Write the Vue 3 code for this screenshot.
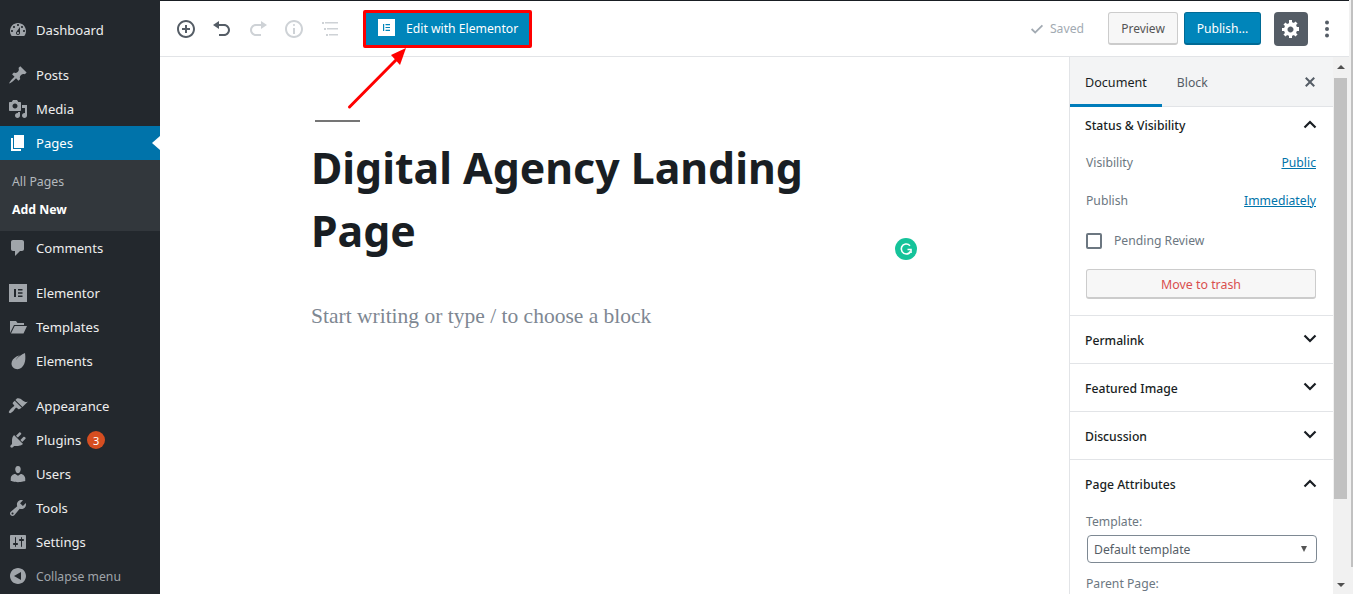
<script setup>
const groups = [
  [{ label: 'Dashboard', icon: 'M3.76 16h12.48c1.1-1.37 1.76-3.11 1.76-5 0-4.42-3.58-8-8-8s-8 3.58-8 8c0 1.89.66 3.63 1.76 5zM10 4c.55 0 1 .45 1 1s-.45 1-1 1-1-.45-1-1 .45-1 1-1zM6 6c.55 0 1 .45 1 1s-.45 1-1 1-1-.45-1-1 .45-1 1-1zm8 0c.55 0 1 .45 1 1s-.45 1-1 1-1-.45-1-1 .45-1 1-1zm-5.37 5.55L12 7v6c0 1.1-.9 2-2 2s-2-.9-2-2c0-.57.24-1.08.63-1.45zM4 10c.55 0 1 .45 1 1s-.45 1-1 1-1-.45-1-1 .45-1 1-1zm12 0c.55 0 1 .45 1 1s-.45 1-1 1-1-.45-1-1 .45-1 1-1zm-5 3c0-.55-.45-1-1-1s-1 .45-1 1 .45 1 1 1 1-.45 1-1z' }],
  [
    { label: 'Posts', icon: 'M10.44 3.02l1.82-1.82 6.36 6.35-1.83 1.82c-1.05-.68-2.48-.57-3.41.36l-.75.75c-.92.93-1.04 2.35-.35 3.41l-1.83 1.82-2.41-2.41-2.8 2.79c-.42.42-3.38 2.71-3.8 2.29s1.86-3.39 2.28-3.81l2.79-2.79L4.1 9.36l1.83-1.82c1.05.69 2.48.57 3.4-.36l.75-.75c.93-.92 1.05-2.35.36-3.41z' },
    { label: 'Media', icon: 'M13 11V4c0-.55-.45-1-1-1h-1.67L9 1H5L3.67 3H2c-.55 0-1 .45-1 1v7c0 .55.45 1 1 1h10c.55 0 1-.45 1-1zM7 4.500c1.380 0 2.500 1.120 2.500 2.500S8.380 9.500 7 9.500 4.500 8.380 4.500 7 5.620 4.500 7 4.500zM14 6h5v10.500c0 1.380-1.120 2.500-2.500 2.500S14 17.880 14 16.500s1.120-2.500 2.500-2.500c.17 0 .34.02.5.05V9h-3V6zm-4 8.050V13h2v3.500c0 1.380-1.120 2.500-2.500 2.500S7 17.880 7 16.500 8.120 14 9.500 14c.17 0 .34.02.5.05z' },
    { label: 'Pages', current: true, icon: 'M6 15V2h10v13H6zm-1 1h8v2H3V5h2v11z', sub: ['All Pages', 'Add New'] },
    { label: 'Comments', icon: 'M5 2h9c1.100 0 2 .9 2 2v7c0 1.100-.9 2-2 2h-2l-5 5v-5H5c-1.100 0-2-.9-2-2V4c0-1.100.9-2 2-2z' },
  ],
  [
    { label: 'Elementor', icon: 'M1 1h18v18H1zM6 6v8h2V6zm4 0v1.600h4.500V6zm0 3.200v1.600h4.500V9.200zm0 3.200V14h4.500v-1.600z', evenodd: true },
    { label: 'Templates', icon: 'M2 4h6l1.500 2H16v2H6L2 16zM6.700 9H19l-3.500 7.500H3z' },
    { label: 'Elements', icon: 'M17 2c.6 4 .6 8-.8 11-1.400 3-3.700 5.200-6.700 5.200-3.500 0-6-2.500-6-5.700 0-3 2-5.300 5-7 1.200-.7 2.500-1 3.600-1.100C10 5.400 8.600 7 8 9c1.800-3 5.500-5.500 9-7z' },
  ],
  [
    { label: 'Appearance', icon: 'M14.480 11.060L7.410 3.990l1.500-1.500c.5-.56 2.300-.47 3.510.32 1.210.8 1.430 1.280 2.910 2.100 1.180.64 2.450 1.260 4.450.85zm-.71.71L6.700 4.700 4.930 6.470c-.39.39-.39 1.020 0 1.410l1.060 1.060c.39.39.39 1.030 0 1.420-.6.6-1.430 1.110-2.210 1.690-.35.26-.7.53-1.010.84-.78.78-1.300 1.700-1.770 2.500-.36.6-.2 1 .2 1.400.4.4.8.6 1.400.2.8-.47 1.720-.99 2.500-1.770.31-.31.58-.66.84-1.010.58-.78 1.090-1.610 1.690-2.210.39-.39 1.030-.39 1.420 0l1.060 1.060c.39.39 1.020.39 1.410 0z' },
    { label: 'Plugins', badge: 3, icon: 'M13.110 4.360L9.870 7.600 8 5.730l3.240-3.240c.35-.34 1.050-.2 1.560.32.52.51.66 1.210.31 1.550zm-8 1.770l.91-1.120 9.010 9.010-1.190.84c-.71.71-2.630 1.160-3.820 1.160H6.140L4.900 17.260c-.59.59-1.540.59-2.120 0-.59-.58-.59-1.530 0-2.120l1.240-1.240v-3.880c0-1.130.4-3.190 1.090-3.890zm7.260 3.970l3.240-3.240c.34-.35 1.040-.21 1.550.31.52.51.66 1.210.31 1.550l-3.240 3.250z' },
    { label: 'Users', icon: 'M10 9.250c-2.270 0-2.730-3.440-2.730-3.440C7 4.020 7.820 2 9.970 2c2.160 0 2.980 2.020 2.710 3.810 0 0-.41 3.440-2.680 3.440zm0 2.570L12.720 10c2.390 0 4.520 2.330 4.520 4.530v2.490s-3.650 1.130-7.240 1.130c-3.650 0-7.240-1.130-7.240-1.130v-2.490c0-2.250 1.940-4.480 4.470-4.480z' },
    { label: 'Tools', icon: 'M16.680 9.770c-1.340 1.340-3.300 1.670-4.950.99l-5.410 6.520c-.99.99-2.590.99-3.580 0s-.99-2.590 0-3.570l6.520-5.420c-.68-1.650-.35-3.610.99-4.950 1.280-1.280 3.120-1.620 4.720-1.060l-2.890 2.890 2.820 2.820 2.860-2.870c.53 1.580.18 3.390-1.080 4.650zM3.810 16.210c.4.39 1.040.39 1.430 0 .4-.4.4-1.040 0-1.430-.39-.4-1.030-.4-1.430 0-.39.39-.39 1.030 0 1.430z' },
    { label: 'Settings', icon: 'M18 16V4c0-.55-.45-1-1-1H3c-.55 0-1 .45-1 1v12c0 .55.45 1 1 1h14c.55 0 1-.45 1-1zM8 11h1c.55 0 1 .45 1 1s-.45 1-1 1H8v1.500c0 .28-.22.5-.5.5s-.5-.22-.5-.5V13H6c-.55 0-1-.45-1-1s.45-1 1-1h1V5.500c0-.28.22-.5.5-.5s.5.22.5.5V11zm5-2h-1c-.55 0-1-.45-1-1s.45-1 1-1h1V5.500c0-.28.22-.5.5-.5s.5.22.5.5V7h1c.55 0 1 .45 1 1s-.45 1-1 1h-1v5.500c0 .28-.22.5-.5.5s-.5-.22-.5-.5V9z' },
    { label: 'Collapse menu', muted: true, icon: 'M18 10c0-4.420-3.580-8-8-8s-8 3.580-8 8 3.580 8 8 8 8-3.580 8-8zm-5 4l-7-4 7-4v8z' },
  ],
]
const tools = [
  { d: 'M10 1c-5 0-9 4-9 9s4 9 9 9 9-4 9-9-4-9-9-9zm0 16c-3.900 0-7-3.100-7-7s3.100-7 7-7 7 3.100 7 7-3.100 7-7 7zm1-11H9v3H6v2h3v3h2v-3h3V9h-3V6z', on: true },
  { d: 'M12 5H7V2L1 6l6 4V7h5c2.200 0 4 1.800 4 4s-1.800 4-4 4H7v2h5c3.300 0 6-2.700 6-6s-2.700-6-6-6z', on: true },
  { d: 'M8 5h5V2l6 4-6 4V7H8c-2.200 0-4 1.800-4 4s1.800 4 4 4h5v2H8c-3.300 0-6-2.700-6-6s2.700-6 6-6z' },
  { d: 'M9 15h2V9H9v6zm1-10c-.5 0-1 .5-1 1s.5 1 1 1 1-.5 1-1-.5-1-1-1zm0-4c-5 0-9 4-9 9s4 9 9 9 9-4 9-9-4-9-9-9zm0 16c-3.900 0-7-3.100-7-7s3.100-7 7-7 7 3.100 7 7-3.100 7-7 7z' },
  { d: 'M2 3h2v2H2zM5 3h13v1.500H5zM4 9h2v2H4zM7 9h11v1.500H7zM6 15h2v2H6zM9 15h9v1.500H9z' },
]
const closedPanels = ['Permalink', 'Featured Image', 'Discussion']
</script>

<template>
  <div class="page">
    <aside class="sidebar">
      <ul v-for="(group, i) in groups" :key="i" class="group">
        <li v-for="item in group" :key="item.label">
          <div class="item" :class="{ current: item.current, muted: item.muted }">
            <svg class="menu-icon" viewBox="0 0 20 20"><path :d="item.icon" :fill-rule="item.evenodd ? 'evenodd' : 'nonzero'" /></svg>
            <span>{{ item.label }}</span>
            <span v-if="item.badge" class="badge">{{ item.badge }}</span>
          </div>
          <ul v-if="item.sub" class="submenu">
            <li v-for="(s, j) in item.sub" :key="s" :class="{ strong: j === 1 }">{{ s }}</li>
          </ul>
        </li>
      </ul>
    </aside>

    <div class="editor">
      <header class="topbar">
        <div class="tools">
          <svg v-for="(t, i) in tools" :key="i" class="tool" :class="{ on: t.on }" viewBox="0 0 20 20"><path :d="t.d" /></svg>
        </div>
        <div class="elementor-wrap">
          <button class="elementor-btn">
            <svg class="e-icon" viewBox="0 0 17 17"><rect width="17" height="17" fill="#fff" /><path d="M5 5h1.200v7H5zM7.500 5H12v1.200H7.500zM7.500 7.900H12v1.200H7.500zM7.500 10.800H12V12H7.500z" fill="#0085ba" /></svg>
            <span>Edit with Elementor</span>
          </button>
        </div>
        <div class="actions">
          <svg class="check" viewBox="0 0 20 20"><path d="M15.300 5.300 8 12.600 4.700 9.300 3.300 10.700 8 15.400l8.700-8.700z" /></svg>
          <span class="saved">Saved</span>
          <button class="btn-preview">Preview</button>
          <button class="btn-publish">Publish...</button>
          <button class="btn-gear">
            <svg viewBox="0 0 20 20"><path d="M18 12h-2.180c-.17.7-.44 1.350-.81 1.930l1.540 1.540-2.100 2.100-1.540-1.540c-.58.36-1.230.64-1.910.81V19H8v-2.180c-.68-.17-1.330-.45-1.910-.81l-1.540 1.540-2.120-2.120 1.540-1.540c-.36-.58-.64-1.230-.81-1.890H1V9h2.180c.17-.7.44-1.350.8-1.930L2.460 5.530l2.100-2.100 1.540 1.540c.58-.36 1.230-.64 1.910-.81V1h3v2.180c.68.17 1.330.45 1.910.81l1.540-1.540 2.120 2.120-1.540 1.540c.36.58.64 1.230.81 1.890H18v3zm-8.500 1.500c1.660 0 3-1.340 3-3s-1.340-3-3-3-3 1.340-3 3 1.340 3 3 3z" fill="#fff" /></svg>
          </button>
          <svg class="kebab" viewBox="0 0 6 20"><circle cx="3" cy="3.500" r="2" /><circle cx="3" cy="10" r="2" /><circle cx="3" cy="16.500" r="2" /></svg>
        </div>
      </header>

      <div class="workspace">
        <main class="canvas">
          <div class="separator"></div>
          <h1 class="title">Digital Agency Landing Page</h1>
          <p class="placeholder">Start writing or type / to choose a block</p>
          <div class="grammarly">
            <svg viewBox="0 0 22 22"><circle cx="11" cy="11" r="11" fill="#15c39a" /><path d="M15.500 13.500c-.8 1.500-2.500 2.500-4.300 2.500A5 5 0 1 1 15 7.700" fill="none" stroke="#fff" stroke-width="1.600" /><path d="M12.500 11.500h3.500v3.500" fill="none" stroke="#fff" stroke-width="1.600" /></svg>
          </div>
        </main>

        <aside class="panel">
          <div class="tabs">
            <div class="tab active">Document</div>
            <div class="tab">Block</div>
            <svg class="close" viewBox="0 0 20 20"><path d="M14.950 6.460 11.410 10l3.540 3.540-1.410 1.410L10 11.420l-3.530 3.530-1.420-1.420L8.580 10 5.050 6.470l1.420-1.420L10 8.580l3.540-3.530z" /></svg>
          </div>

          <section class="sec status">
            <div class="sec-head">
              <span>Status &amp; Visibility</span>
              <svg class="chev" viewBox="0 0 14 9"><path d="M1.500 7.500 7 2l5.500 5.500" /></svg>
            </div>
            <div class="row first"><span>Visibility</span><a>Public</a></div>
            <div class="row second"><span>Publish</span><a>Immediately</a></div>
            <label class="pending"><i class="box"></i><span>Pending Review</span></label>
            <button class="trash">Move to trash</button>
          </section>

          <section v-for="p in closedPanels" :key="p" class="sec closed">
            <div class="sec-head">
              <span>{{ p }}</span>
              <svg class="chev" viewBox="0 0 14 9"><path d="M1.500 1.500 7 7l5.500-5.500" /></svg>
            </div>
          </section>

          <section class="sec attrs">
            <div class="sec-head">
              <span>Page Attributes</span>
              <svg class="chev" viewBox="0 0 14 9"><path d="M1.500 7.500 7 2l5.500 5.500" /></svg>
            </div>
            <div class="field-label">Template:</div>
            <div class="select"><span>Default template</span><i class="caret"></i></div>
            <div class="field-label parent">Parent Page:</div>
          </section>
        </aside>

        <div class="scrollbar">
          <i class="arrow up"></i>
          <div class="thumb"></div>
          <i class="arrow down"></i>
        </div>
      </div>
    </div>

    <div class="page-scroll"><div class="page-thumb"></div></div>

    <svg class="annotation" width="80" height="80" viewBox="0 0 80 80">
      <path d="M3.500 67 52 18" stroke="#f00" stroke-width="3" stroke-linecap="round" fill="none" />
      <path d="M60 8 45 15 54 25z" fill="#f00" />
    </svg>
  </div>
</template>

<style>
html, body { margin: 0; padding: 0; background: #fff; overflow: hidden; }
</style>

<style scoped>
* { box-sizing: border-box; }
.page { position: relative; display: flex; width: 1353px; height: 594px; overflow: hidden; background: #fff; font-family: "Noto Sans", "Open Sans", sans-serif; font-size: 12.2px; color: #191e23; }
ul { list-style: none; margin: 0; padding: 0; }
button { font-family: inherit; font-size: 12.2px; cursor: pointer; }

.sidebar { flex: 0 0 160px; background: #23282d; padding-top: 13px; }
.group + .group { margin-top: 11px; }
.item { position: relative; display: flex; align-items: center; height: 34px; padding-left: 8px; color: #eee; font-size: 13.1px; }
.menu-icon { width: 20px; height: 20px; margin-right: 8px; fill: #a0a5aa; flex: none; }
.item.current { background: #0073aa; color: #fff; }
.item.current .menu-icon { fill: #fff; }
.item.current::after { content: ""; position: absolute; right: 0; top: 10px; border: 7px solid transparent; border-right: 8px solid #fff; border-left: 0; }
.item.muted { color: #a0a5aa; font-size: 12.2px; }
.badge { display: inline-flex; align-items: center; justify-content: center; width: 18px; height: 18px; margin-left: 6px; border-radius: 50%; background: #d54e21; color: #fff; font-size: 11px; }
.submenu { height: 71px; background: #32373c; padding-top: 8px; font-size: 12.3px; color: #b4b9be; }
.submenu li { height: 28px; line-height: 28px; padding-left: 12px; }
.submenu .strong { color: #fff; font-weight: 700; }

.editor { flex: 1; display: flex; flex-direction: column; min-width: 0; }
.topbar { display: flex; align-items: center; height: 57px; border-top: 1px solid #191e23; border-bottom: 1px solid #e2e4e7; }
.tools { display: flex; gap: 16px; padding-left: 16px; width: 203px; }
.tool { width: 20px; height: 20px; fill: #ced2d6; }
.tool.on { fill: #555d66; }
.elementor-wrap { display: flex; }
.elementor-btn { display: flex; align-items: center; width: 169px; height: 38px; padding: 0 0 2px 12px; background: #0085ba; border: 3px solid #f00; border-radius: 2px; color: #fff; }
.elementor-btn span { padding-top: 2px; }
.e-icon { width: 17px; height: 17px; margin-right: 11px; flex: none; }
.actions { display: flex; align-items: center; margin-left: auto; padding-right: 15px; }
.check { width: 18px; height: 18px; fill: #a2aab2; margin-right: 4px; }
.saved { color: #a2aab2; font-size: 12.2px; margin-right: 24px; }
.btn-preview { width: 70px; height: 33px; margin-right: 6px; padding: 0; background: #f7f7f7; border: 1px solid #ccc; border-bottom-width: 2px; border-radius: 3px; color: #555; font-size: 12px; }
.btn-publish { width: 77px; height: 33px; margin-right: 13px; padding: 0; background: #0085ba; border: 1px solid #006a95; border-bottom-width: 2px; border-radius: 3px; color: #fff; font-size: 12.1px; }
.btn-gear { display: flex; align-items: center; justify-content: center; width: 34px; height: 34px; padding: 0; margin-right: 16px; background: #555d66; border: 0; border-radius: 4px; }
.btn-gear svg { width: 20px; height: 20px; }
.kebab { width: 6px; height: 20px; margin-right: 4px; fill: #555d66; }

.workspace { flex: 1; display: flex; min-height: 0; }
.canvas { position: relative; flex: 1; padding: 63px 0 0 152px; }
.separator { width: 45px; height: 2px; margin-left: 3px; background: #757575; }
.title { width: 560px; margin: 14px 0 0 -1px; font-size: 42.8px; line-height: 63px; font-weight: 700; color: #191e23; }
.placeholder { margin: 39px 0 0 -1px; font-family: "Liberation Serif", serif; font-size: 21.5px; line-height: 30px; color: #7e8792; }
.grammarly { position: absolute; left: 735px; top: 181px; width: 22px; height: 22px; }
.grammarly svg { display: block; width: 22px; height: 22px; }

.panel { flex: 0 0 264px; border-left: 1px solid #e2e4e7; overflow: hidden; }
.tabs { position: relative; display: flex; height: 50px; background: #f3f4f5; border-bottom: 1px solid #e2e4e7; }
.tab { display: flex; align-items: center; height: 50px; padding: 0 15px; color: #555d66; font-size: 12.2px; }
.tab.active { color: #191e23; font-size: 12.6px; border-bottom: 3px solid #007cba; padding-top: 3px; }
.close { position: absolute; right: 13px; top: 15px; width: 20px; height: 20px; fill: #555d66; }
.sec { border-bottom: 1px solid #e2e4e7; padding: 0 16px 0 15px; }
.sec-head { display: flex; align-items: center; justify-content: space-between; height: 47px; font-weight: 500; color: #191e23; font-size: 12.2px; }
.chev { width: 14px; height: 9px; fill: none; stroke: #191e23; stroke-width: 2.2; margin-top: -2px; }
.status { height: 209px; }
.status .sec-head { height: 36px; }
.row { display: flex; align-items: center; justify-content: space-between; height: 20px; padding: 0 1px; color: #6c7781; }
.row a { color: #0073aa; text-decoration: underline; }
.row.first { margin-top: 9px; }
.row.second { margin-top: 18px; }
.pending { display: flex; align-items: center; gap: 12px; margin-top: 22px; padding-left: 1px; color: #6c7781; }
.box { width: 16px; height: 16px; border: 2px solid #6c7781; border-radius: 2px; }
.trash { display: block; width: 230px; height: 30px; margin: 20px 0 0 1px; padding: 2px 0 0; background: #f7f7f7; border: 1px solid #ccc; border-bottom-width: 2px; border-radius: 3px; color: #d94f4f; font-size: 12.4px; }
.closed { height: 48px; }
.closed .sec-head { height: 49px; }
.closed .chev { margin-top: -4px; }
.attrs { border-bottom: 0; }
.attrs .sec-head { height: 48px; }
.field-label { color: #6c7781; margin-top: 4px; line-height: 20px; padding-left: 1px; }
.select { display: flex; align-items: center; justify-content: space-between; width: 230px; height: 28px; margin: 3px 0 0 2px; padding: 0 9px 0 6px; border: 1px solid #7e8993; border-radius: 4px; color: #555d66; }
.caret { width: 0; height: 0; border-left: 3px solid transparent; border-right: 3px solid transparent; border-top: 6px solid #555; }
.field-label.parent { margin-top: 11px; }

.scrollbar { position: relative; flex: 0 0 16px; background: #f1f1f1; }
.thumb { position: absolute; left: 1px; right: 2px; top: 21px; height: 421px; background: #c1c1c1; }
.arrow { position: absolute; left: 4px; width: 0; height: 0; border-left: 4px solid transparent; border-right: 4px solid transparent; }
.arrow.up { top: 8px; border-bottom: 4px solid #505050; }
.arrow.down { bottom: 7px; border-top: 4px solid #505050; }

.page-scroll { flex: 0 0 4px; padding-left: 2px; background: #f1f1f1; }
.page-thumb { height: 567px; background: #c1c1c1; }

.annotation { position: absolute; left: 346px; top: 40px; }
</style>
